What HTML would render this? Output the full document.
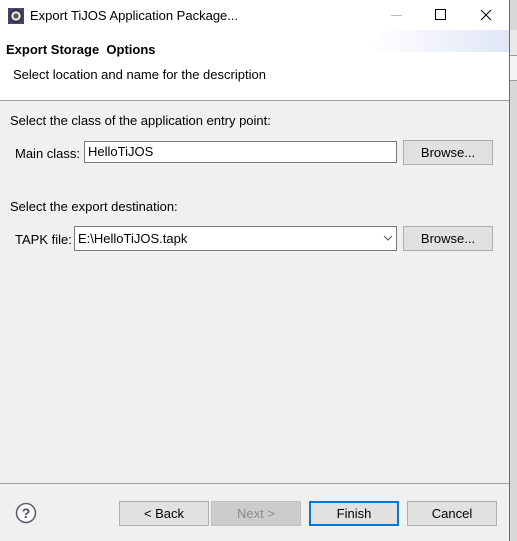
<!DOCTYPE html>
<html><head><style>
body{margin:0;width:517px;height:541px;background:#f0f0f0;position:relative;overflow:hidden;font-family:"Segoe UI","Liberation Sans",sans-serif;font-size:13px;color:#000}
.a{position:absolute}
.win{left:0;top:0;width:509px;height:541px;background:#f0f0f0;border-right:1px solid #1883d7}
.btn{position:absolute;background:#e1e1e1;border:1px solid #adadad;box-sizing:border-box;text-align:center;line-height:23px}
.inp{position:absolute;background:#fff;border:1px solid #7a7a7a;box-sizing:border-box;line-height:20px;padding-left:3px}
</style></head><body>
<div class="a" style="left:510px;top:0;width:7px;height:541px;background:#d8d8d8"></div>
<div class="a" style="left:510px;top:30px;width:7px;height:25px;background:#e8e8e8;border-bottom:1px solid #999"></div>
<div class="a" style="left:510px;top:56px;width:7px;height:24px;background:#f4f4f4;border-bottom:1px solid #999"></div>
<div class="a win"></div>
<div class="a" style="left:0;top:0;width:509px;height:100px;background:#fff"></div>
<div class="a" style="left:370px;top:30px;width:139px;height:22px;background:linear-gradient(90deg,#fff,#dfe6f6);border-radius:60px 0 0 0"></div>
<svg class="a" style="left:8px;top:8px" width="16" height="16" viewBox="0 0 16 16"><rect x="0" y="0" width="16" height="16" fill="#4a3d66"/><circle cx="8" cy="8" r="5.5" fill="#ddd" stroke="#222" stroke-width="1.2"/><circle cx="8" cy="8" r="2.5" fill="#555"/></svg>
<div class="a" style="left:30px;top:8px">Export TiJOS Application Package...</div>
<div class="a" style="left:391px;top:15px;width:11px;height:1px;background:#bbb"></div>
<div class="a" style="left:435px;top:9px;width:9px;height:9px;border:1px solid #000"></div>
<svg class="a" style="left:480px;top:9px" width="12" height="12"><path d="M1 1L11 11M11 1L1 11" stroke="#000" stroke-width="1"/></svg>
<div class="a" style="left:6px;top:42px;font-weight:bold">Export Storage&nbsp; Options</div>
<div class="a" style="left:13px;top:67px">Select location and name for the description</div>
<div class="a" style="left:0;top:100px;width:509px;height:1px;background:#a0a0a0"></div>
<div class="a" style="left:10px;top:113px">Select the class of the application entry point:</div>
<div class="a" style="left:15px;top:146px">Main class:</div>
<div class="inp" style="left:84px;top:141px;width:313px;height:22px">HelloTiJOS</div>
<div class="btn" style="left:403px;top:140px;width:90px;height:25px">Browse...</div>
<div class="a" style="left:10px;top:199px">Select the export destination:</div>
<div class="a" style="left:15px;top:232px">TAPK file:</div>
<div class="inp" style="left:74px;top:226px;width:323px;height:25px;line-height:23px">E:\HelloTiJOS.tapk</div>
<svg class="a" style="left:383px;top:235px" width="10" height="6"><path d="M1 1L5 5L9 1" stroke="#555" fill="none"/></svg>
<div class="btn" style="left:403px;top:226px;width:90px;height:25px">Browse...</div>
<div class="a" style="left:0;top:483px;width:509px;height:1px;background:#a0a0a0"></div>
<svg class="a" style="left:15px;top:502px" width="22" height="22"><circle cx="11" cy="11" r="9.5" fill="#fafafa" stroke="#5a6270" stroke-width="1.6"/><text x="11" y="16" text-anchor="middle" font-family="Liberation Sans" font-weight="bold" font-size="14" fill="#4a5260">?</text></svg>
<div class="btn" style="left:119px;top:501px;width:90px;height:25px">&lt; Back</div>
<div class="btn" style="left:211px;top:501px;width:90px;height:25px;background:#cccccc;border-color:#bfbfbf;color:#8a8a8a">Next &gt;</div>
<div class="btn" style="left:309px;top:501px;width:90px;height:25px;border:2px solid #0078d7;line-height:21px">Finish</div>
<div class="btn" style="left:407px;top:501px;width:90px;height:25px">Cancel</div>
</body></html>
